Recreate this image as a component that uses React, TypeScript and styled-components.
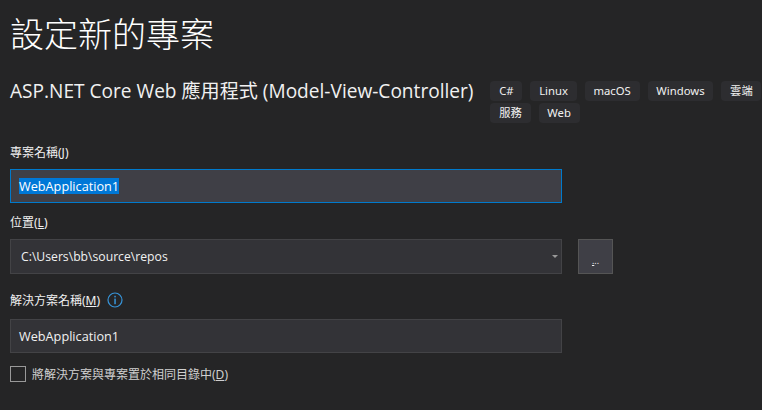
import React from "react";
import styled, { createGlobalStyle } from "styled-components";

const Global = createGlobalStyle`
  html, body { margin: 0; padding: 0; background: #252526; }
  body { width: 762px; height: 410px; overflow: hidden; }
`;

const FONT = `"Open Sans", "Noto Sans", "Noto Sans CJK TC", sans-serif`;
const CJK = `"Noto Sans", "Noto Sans CJK TC", sans-serif`;

const Page = styled.div`
  width: 762px;
  height: 410px;
  box-sizing: border-box;
  padding: 11px 0 0 10px;
  background: #252526;
  color: #f1f1f1;
  font-family: ${FONT};
  display: flex;
  flex-direction: column;
  overflow: hidden;
`;

const Title = styled.h1`
  margin: 0;
  font-family: ${CJK};
  font-size: 34px;
  line-height: 46px;
  font-weight: 300;
  color: #ffffff;
`;

const Header = styled.div`
  display: flex;
  margin-top: 24px;
  gap: 17px;
  align-items: flex-start;
`;

const Subtitle = styled.h2`
  margin: 0;
  font-size: 19.1px;
  line-height: 20px;
  font-weight: 400;
  white-space: nowrap;
  color: #f1f1f1;
  font-family: "Open Sans", "Noto Sans CJK TC", sans-serif;
`;

const Tags = styled.div`
  display: flex;
  flex-wrap: wrap;
  gap: 2px 8px;
  width: 280px;
  flex: none;
`;

const Tag = styled.span`
  display: block;
  height: 20px;
  line-height: 20px;
  padding: 0 8.75px;
  border-radius: 4px;
  background: #2d2d30;
  font-size: 11.3px;
  color: #f1f1f1;
  font-family: ${CJK};
  white-space: nowrap;
`;

const Field = styled.div<{ $top: number }>`
  margin-top: ${(p) => p.$top}px;
`;

const Label = styled.label`
  display: flex;
  align-items: center;
  gap: 7px;
  height: 18px;
  font-size: 12px;
  color: #f1f1f1;
  font-family: ${CJK};
`;

const Key = styled.span`
  text-decoration: underline;
  text-underline-offset: 1px;
`;

const InfoIcon = styled.svg`
  width: 16px;
  height: 16px;
  flex: none;
`;

const InputRow = styled.div<{ $gap?: number }>`
  display: flex;
  gap: 16px;
  margin-top: ${(p) => p.$gap ?? 8}px;
`;

const TextBox = styled.div<{ $focused?: boolean; $height?: number }>`
  position: relative;
  box-sizing: border-box;
  width: 552px;
  height: ${(p) => p.$height ?? 34}px;
  display: flex;
  align-items: center;
  padding: 0 8px;
  background: ${(p) => (p.$focused ? "#3f3f46" : "#333337")};
  border: 1px solid ${(p) => (p.$focused ? "#007acc" : "#434346")};
  font-size: 12.7px;
  font-family: ${FONT};
  color: #f1f1f1;
`;

const Selected = styled.span`
  background: #0078d7;
  color: #ffffff;
  line-height: 16px;
`;

const Combo = styled(TextBox)`
  padding-left: 10px;
  font-size: 12.2px;
`;

const Arrow = styled.span`
  position: absolute;
  right: 3px;
  top: 15px;
  width: 0;
  height: 0;
  border-left: 3px solid transparent;
  border-right: 3px solid transparent;
  border-top: 3px solid #999999;
`;

const Browse = styled.button`
  box-sizing: border-box;
  width: 35px;
  height: 35px;
  padding: 7px 0 0;
  background: #3f3f46;
  border: 1px solid #555555;
  color: #f1f1f1;
  font-size: 9px;
  font-family: ${FONT};
  line-height: 1;
`;

const CheckRow = styled.div`
  display: flex;
  align-items: center;
  gap: 6px;
  margin-top: 12px;
  font-size: 12px;
  font-family: ${CJK};
  color: #d0d0d0;
`;

const Box = styled.span`
  box-sizing: border-box;
  width: 16px;
  height: 16px;
  border: 1px solid #999999;
  background: #252526;
`;

const tags = ["C#", "Linux", "macOS", "Windows", "雲端", "服務", "Web"];

export default function App() {
  return (
    <Page>
      <Global />
      <Title>設定新的專案</Title>
      <Header>
        <Subtitle>ASP.NET Core Web 應用程式 (Model-View-Controller)</Subtitle>
        <Tags>
          {tags.map((t) => (
            <Tag key={t}>{t}</Tag>
          ))}
        </Tags>
      </Header>
      <Field $top={20}>
        <Label>
          <span>
            專案名稱(<Key>J</Key>)
          </span>
        </Label>
        <InputRow>
          <TextBox $focused>
            <Selected>WebApplication1</Selected>
          </TextBox>
        </InputRow>
      </Field>
      <Field $top={10}>
        <Label>
          <span>
            位置(<Key>L</Key>)
          </span>
        </Label>
        <InputRow>
          <Combo $height={35}>
            C:\Users\bb\source\repos
            <Arrow />
          </Combo>
          <Browse>
            <Key>.</Key>..
          </Browse>
        </InputRow>
      </Field>
      <Field $top={17}>
        <Label>
          <span>
            解決方案名稱(<Key>M</Key>)
          </span>
          <InfoIcon viewBox="0 0 16 16">
            <circle cx="8" cy="8" r="7" fill="none" stroke="#3794d8" strokeWidth="1.2" />
            <rect x="7.3" y="3.8" width="1.5" height="1.6" fill="#3794d8" />
            <rect x="7.3" y="6.6" width="1.5" height="5.6" fill="#3794d8" />
          </InfoIcon>
        </Label>
        <InputRow $gap={10}>
          <TextBox>WebApplication1</TextBox>
        </InputRow>
      </Field>
      <CheckRow>
        <Box />
        <span>
          將解決方案與專案置於相同目錄中(<Key>D</Key>)
        </span>
      </CheckRow>
    </Page>
  );
}
